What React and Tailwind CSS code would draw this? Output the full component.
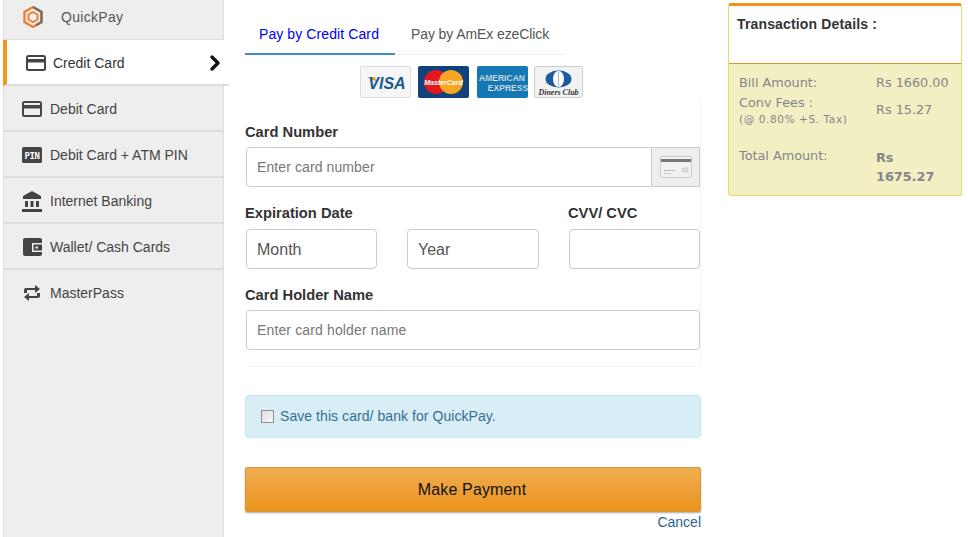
import { ChevronRight } from "lucide-react"

const CardIcon = () => (
  <svg width="20" height="16" viewBox="0 0 20 16">
    <rect x="1" y="1" width="18" height="14" rx="1.5" fill="none" stroke="#444" strokeWidth="2" />
    <rect x="1" y="4" width="18" height="3.5" fill="#444" />
  </svg>
)

const PinIcon = () => (
  <svg width="20" height="16" viewBox="0 0 20 16">
    <rect width="20" height="16" rx="1.5" fill="#444" />
    <text x="10" y="11.5" textAnchor="middle" fontFamily="'DejaVu Sans Mono', monospace" fontWeight="700" fontSize="9" letterSpacing="-0.5" fill="#fff">PIN</text>
  </svg>
)

const BankIcon = () => (
  <svg width="20" height="21" viewBox="0 0 20 21" fill="#444">
    <path d="M10 0 L19 5 V8 H1 V5 Z" />
    <rect x="3" y="10" width="3" height="6" />
    <rect x="8.5" y="10" width="3" height="6" />
    <rect x="14" y="10" width="3" height="6" />
    <rect x="0" y="18" width="20" height="3" />
  </svg>
)

const WalletIcon = () => (
  <svg width="19" height="18" viewBox="0 0 19 18">
    <rect width="19" height="18" rx="2" fill="#444" />
    <rect x="9" y="5" width="10" height="9" fill="#eee" />
    <rect x="10.5" y="6.5" width="8.5" height="6" fill="#444" />
    <rect x="12.5" y="8.5" width="2.5" height="2" fill="#eee" />
  </svg>
)

// retweet arrows, drawn because lucide's Repeat is rounder and thinner
const LoopIcon = () => (
  <svg width="18" height="18" viewBox="0 0 18 18" fill="#444">
    <path d="M3 4 H12 V1 L17 5 L12 9 V6 H4 V9 H1 V6 Q1 4 3 4 Z" />
    <path d="M15 14 H6 V17 L1 13 L6 9 V12 H14 V9 H17 V12 Q17 14 15 14 Z" />
  </svg>
)

const QuickPayIcon = () => (
  <svg width="20" height="22" viewBox="0 0 20 22">
    <path d="M10 1 L18.5 6 V16 L10 21 L1.5 16 V6 Z" fill="none" stroke="#f07f2e" strokeWidth="2.4" />
    <path d="M10 1 L18.5 6 V16 L13 19.2" fill="none" stroke="#77706a" strokeWidth="2.4" />
    <path d="M10 6 L14.5 8.5 V13.5 L10 16 L5.5 13.5 V8.5 Z" fill="none" stroke="#f07f2e" strokeWidth="2" />
  </svg>
)

const VisaLogo = () => (
  <svg width="51" height="32" viewBox="0 0 51 32">
    <rect x="0.5" y="0.5" width="50" height="31" rx="2" fill="#f6f6f6" stroke="#ddd" />
    <path d="M7 11 H15 L17 16 Z" fill="#f0a81e" />
    <text x="27" y="22.5" textAnchor="middle" fontFamily="'Liberation Sans', sans-serif" fontStyle="italic" fontWeight="700" fontSize="16" fill="#1a5a96">VISA</text>
  </svg>
)

const MasterLogo = () => (
  <svg width="51" height="32" viewBox="0 0 51 32">
    <rect width="51" height="32" rx="2" fill="#12427c" />
    <circle cx="18" cy="16" r="12" fill="#e2171f" />
    <circle cx="33" cy="16" r="12" fill="#f5a623" />
    <text x="25.5" y="19" textAnchor="middle" fontFamily="'Liberation Sans', sans-serif" fontStyle="italic" fontWeight="700" fontSize="7" fill="#fff">MasterCard</text>
  </svg>
)

const AmexLogo = () => (
  <svg width="51" height="32" viewBox="0 0 51 32">
    <rect width="51" height="32" rx="2" fill="#1478b4" />
    <text x="25" y="15" textAnchor="middle" fontFamily="'Liberation Sans', sans-serif" fontWeight="700" fontSize="8.4" letterSpacing="0.1" fill="#fff" stroke="#0d5f94" strokeWidth="0.25">AMERICAN</text>
    <text x="31" y="25" textAnchor="middle" fontFamily="'Liberation Sans', sans-serif" fontWeight="700" fontSize="8.4" letterSpacing="0.1" fill="#fff" stroke="#0d5f94" strokeWidth="0.25">EXPRESS</text>
  </svg>
)

const DinersLogo = () => (
  <svg width="49" height="32" viewBox="0 0 49 32">
    <rect x="0.5" y="0.5" width="48" height="31" rx="2" fill="#f2f2f2" stroke="#ccc" />
    <ellipse cx="24.5" cy="13" rx="13" ry="8.5" fill="#1d5c9e" />
    <ellipse cx="24.5" cy="13" rx="5.5" ry="8" fill="#fff" />
    <rect x="24" y="6" width="1" height="14" fill="#9fb9d6" />
    <text x="24.5" y="29" textAnchor="middle" fontFamily="'Liberation Serif', serif" fontStyle="italic" fontWeight="700" fontSize="8" fill="#333">Diners Club</text>
  </svg>
)

const CardThumb = () => (
  <svg width="32" height="23" viewBox="0 0 32 23">
    <rect x="0.5" y="0.5" width="31" height="21" rx="1.5" fill="#f2f2f2" stroke="#ccc" />
    <rect x="1" y="3" width="30" height="3" fill="#777" />
    <rect x="22" y="12" width="6" height="4" fill="#ddd" stroke="#bbb" strokeWidth="0.5" />
    <rect x="4" y="14" width="11" height="1" fill="#bbb" />
    <rect x="4" y="17" width="7" height="1" fill="#ccc" />
  </svg>
)

const menu = [
  { label: "Debit Card", icon: <CardIcon /> },
  { label: "Debit Card + ATM PIN", icon: <PinIcon /> },
  { label: "Internet Banking", icon: <BankIcon /> },
  { label: "Wallet/ Cash Cards", icon: <WalletIcon /> },
  { label: "MasterPass", icon: <LoopIcon />, last: true },
]

function Sidebar() {
  return (
    <aside className="w-[221px] ml-[3px] shrink-0 h-[537px] bg-[#eeeeee] border-l border-r border-[#dddddd] text-[14px]">
      <div className="h-[40px] flex items-center border-b border-[#dddddd] pb-[5px] text-[#555555] tracking-[0.3px]">
        <div className="ml-[19px]"><QuickPayIcon /></div>
        <span className="ml-[18px]">QuickPay</span>
      </div>
      <div className="h-[46px] -mr-[6px] -ml-px relative flex items-center pt-[2px] bg-white border-l-4 border-l-[#f7931e] border-b-2 border-b-[#dddddd] text-[#333333]">
        <div className="ml-[19px]"><CardIcon /></div>
        <span className="ml-[7px]">Credit Card</span>
        <ChevronRight size={24} strokeWidth={3.4} color="#111" className="ml-auto mr-[2px]" />
      </div>
      {menu.map((m) => (
        <div key={m.label} className={`h-[46px] flex items-center text-[#444444] ${m.last ? "" : "pt-[2px] border-b-2 border-[#dddddd]"}`}>
          <div className="w-[20px] ml-[18px] flex justify-center">{m.icon}</div>
          <span className="ml-[8px]">{m.label}</span>
        </div>
      ))}
    </aside>
  )
}

function Field({ placeholder, className }) {
  return (
    <div className={`h-[40px] flex items-center px-[10px] bg-white border border-[#cccccc] rounded-[4px] ${className}`}>
      {placeholder}
    </div>
  )
}

function PaymentForm() {
  return (
    <main className="w-[456px] ml-[21px] shrink-0 text-[14px] text-[#333333]">
      <div className="flex h-[55px] w-[320px] border-b border-[#eeeeee]">
        <div className="w-[150px] -mb-px pt-[24px] pr-[2px] text-center text-[#0000ee] border-b-2 border-[#428bca] tracking-[0.1px]">Pay by Credit Card</div>
        <div className="pt-[24px] pl-[16px] text-[#555555] tracking-[-0.1px]">Pay by AmEx ezeClick</div>
      </div>

      <div className="flex justify-end pr-[118px] mt-[11px] h-[32px]">
        <VisaLogo />
        <div className="ml-[7px]"><MasterLogo /></div>
        <div className="ml-[8px]"><AmexLogo /></div>
        <div className="ml-[6px]"><DinersLogo /></div>
      </div>

      <div className="h-[269px] pt-[26px] border-b border-r border-[#f5f5f5] rounded-b-[4px]">
        <label className="block font-bold text-[14.7px] leading-[16px]">Card Number</label>
        <div className="flex h-[40px] mt-[7px] ml-px">
          <div className="flex-1 flex items-center px-[10px] border border-[#cccccc] rounded-l-[4px] text-[#777777] tracking-[0.1px]">Enter card number</div>
          <div className="w-[48px] flex items-center justify-center bg-[#eeeeee] border border-l-0 border-[#cccccc]"><CardThumb /></div>
        </div>

        <div className="flex mt-[18px] font-bold text-[14.7px] leading-[16px]">
          <label className="w-[323px]">Expiration Date</label>
          <label>CVV/ CVC</label>
        </div>
        <div className="flex mt-[8px] ml-px text-[16px] text-[#555555]">
          <Field placeholder={<span className="pt-[2px]">Month</span>} className="w-[131px]" />
          <Field placeholder={<span className="pt-[2px]">Year</span>} className="w-[132px] ml-[30px]" />
          <Field className="w-[131px] ml-[30px]" />
        </div>

        <label className="block mt-[18px] font-bold text-[14.7px] leading-[16px]">Card Holder Name</label>
        <Field placeholder="Enter card holder name" className="mt-[7px] ml-px w-[454px] text-[#777777] tracking-[0.14px]" />
      </div>

      <div className="h-[43px] mt-[28px] flex items-center bg-[#d9edf7] border border-[#bce8f1] rounded-[4px] text-[#31708f] tracking-[0.06px]">
        <span className="w-[13px] h-[13px] ml-[15px] border border-[#8f8f8f] bg-gradient-to-br from-[#dddddd] to-[#f8f8f8]" />
        <span className="ml-[6px]">Save this card/ bank for QuickPay.</span>
      </div>

      <button className="block w-full h-[45px] mt-[29px] pr-[2px] bg-gradient-to-b from-[#f0ad4e] to-[#eb9316] border border-[#d39b3f] rounded-[2px] shadow-[0_1px_2px_rgba(0,0,0,0.35)] text-[16px] text-[#111111] tracking-[0.15px]">
        Make Payment
      </button>
      <div className="text-right text-[14px] leading-[20px] text-[#2a6496]">Cancel</div>
    </main>
  )
}

function Details() {
  return (
    <section className="w-[234px] h-[193px] ml-[27px] mt-[3px] shrink-0 bg-[#f2efc3] border border-t-[3px] border-[#e5d96b] border-t-[#f0921e] rounded-[3px] font-['DejaVu_Sans',sans-serif] text-[12.8px] leading-[15px] text-[#85858c]">
      <div className="h-[58px] bg-white border-b border-[#e0952f] pl-[8px] pt-[11px] font-['Liberation_Sans',sans-serif] font-bold text-[14px] text-[#333333] tracking-[0.15px]">
        Transaction Details :
      </div>
      <div className="flex pl-[10px] pt-[11px]">
        <div className="w-[137px]">Bill Amount:</div>
        <div>Rs 1660.00</div>
      </div>
      <div className="flex pl-[10px] pt-[5px]">
        <div className="w-[137px]">
          <div>Conv Fees :</div>
          <div className="text-[10.5px] tracking-[0.6px] leading-[14px] mt-[2px]">(@ 0.80% +S. Tax)</div>
        </div>
        <div className="pt-[7px]">Rs 15.27</div>
      </div>
      <div className="flex pl-[10px] pt-[22px]">
        <div className="w-[137px]">Total Amount:</div>
        <div className="font-bold leading-[19px]">Rs<br />1675.27</div>
      </div>
    </section>
  )
}

export default function App() {
  return (
    <div className="flex w-[968px] h-[537px] overflow-hidden bg-white font-['Liberation_Sans',Arial,sans-serif]">
      <Sidebar />
      <PaymentForm />
      <Details />
    </div>
  )
}
